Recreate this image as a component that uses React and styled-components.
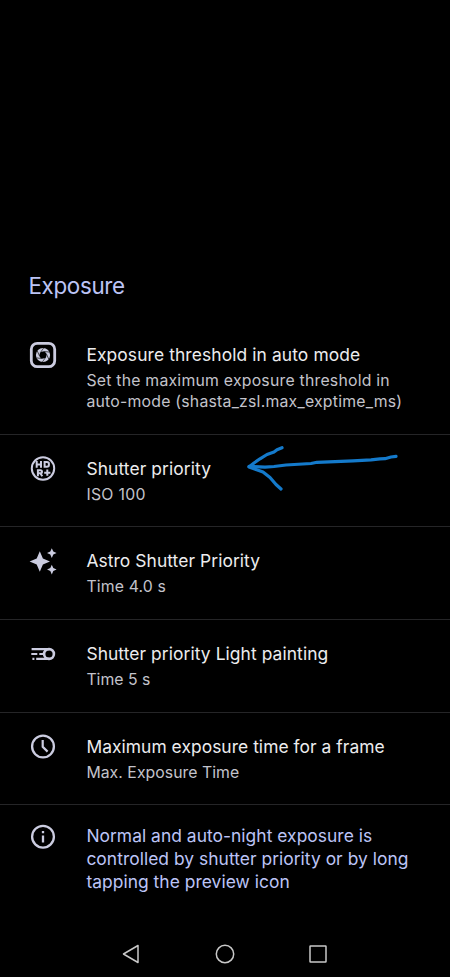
import styled, { createGlobalStyle } from "styled-components";

const GlobalStyle = createGlobalStyle`
  * {
    box-sizing: border-box;
  }

  body {
    margin: 0;
    background-color: #000;
    font-family: Inter, Roboto, sans-serif;
  }
`;

const Screen = styled.main`
  display: flex;
  flex-direction: column;
  height: 977px;
  padding-top: 270px;
  overflow: hidden;
  background-color: #000;
`;

const Heading = styled.h1`
  margin: 0 0 19px;
  padding-left: 28.5px;
  font-size: 22.4px;
  font-weight: 400;
  line-height: 32px;
  letter-spacing: -0.35px;
  color: #bcc4f6;
`;

const StyledRow = styled.section`
  position: relative;
  display: grid;
  grid-template-columns: 58.4px 1fr;
  height: ${(props) => props.$height}px;
  padding: 22px 0 0 28px;
  border-bottom: 1px solid #252527;
`;

const IconBox = styled.span`
  display: flex;
  width: 30px;
  height: 24px;
  align-items: center;
  justify-content: center;
  color: #cbcce0;

  svg {
    flex: none;
    overflow: visible;
  }
`;

const Title = styled.h2`
  margin: 0 0 3px;
  font-size: 17.4px;
  font-weight: 400;
  line-height: 24px;
  letter-spacing: ${(props) => props.$tracking}px;
  white-space: nowrap;
  color: #ececee;
`;

const Description = styled.p`
  margin: 0;
  font-size: 15.8px;
  line-height: 21px;
  letter-spacing: ${(props) => props.$tracking}px;
  white-space: nowrap;
  color: #c3c3cb;
`;

const Info = styled.section`
  display: grid;
  grid-template-columns: 58.4px 1fr;
  padding: 20px 0 0 28px;
`;

const InfoText = styled.p`
  margin: 0;
  font-size: 17.4px;
  line-height: 22.8px;
  letter-spacing: 0.04px;
  color: #bcc4f6;
`;

const InfoLine = styled.span`
  display: block;
  white-space: nowrap;
`;

const NavBar = styled.nav`
  display: flex;
  justify-content: space-between;
  height: 47px;
  margin-top: auto;
  padding: 0 122px 0 121px;
  align-items: center;
`;

const Arrow = styled.svg`
  position: absolute;
  top: 0;
  left: 235px;
  overflow: visible;
`;

function ApertureIcon() {
  return (
    <svg width="28" height="28" viewBox="0 0 28 28" fill="none">
      <rect x="2.3" y="2.3" width="23.4" height="23.4" rx="6" stroke="currentColor" strokeWidth="2.8" />
      <circle cx="14" cy="14" r="5.3" stroke="currentColor" strokeWidth="3.6" />
      {[0, 60, 120, 180, 240, 300].map((angle) => (
        <path
          key={angle}
          d="M11.2 11.8 14.8 6.8"
          stroke="#000"
          strokeWidth="0.6"
          transform={`rotate(${angle} 14 14)`}
        />
      ))}
    </svg>
  );
}

function HdrIcon() {
  return (
    <svg width="28" height="28" viewBox="0 0.5 28 28" fill="none" stroke="currentColor" strokeWidth="2">
      <circle cx="14" cy="14" r="11.2" />
      <path d="M7.700 6.500v6.800M12 6.500v6.800M7.700 9.900H12M15.600 7.500h2.300q2 0 2 1.800v1.200q0 1.800-2 1.800h-2.300z" />
      <path d="M8.900 21.800v-6h2.500q1.600 0 1.600 1.500t-1.600 1.500H8.900M11.300 18.800l2 3M15.200 18.200h6.200M18.300 15.100v6.200" />
    </svg>
  );
}

function SparklesIcon() {
  return (
    <svg width="28" height="28" viewBox="0 0 28 28" fill="currentColor">
      <path d="M10.800 4.300l3.100 7.100 7.100 3.100-7.100 3.100-3.100 7.100-3.100-7.100-7.100-3.100 7.100-3.100z" />
      <path d="M22.800 1.300l1.500 3.300 3.300 1.500-3.300 1.500-1.500 3.300-1.500-3.300L18 6.100l3.300-1.500z" />
      <path d="M22.800 17.800l1.500 3.300 3.300 1.500-3.300 1.500-1.500 3.300-1.500-3.300-3.300-1.500 3.300-1.500z" />
    </svg>
  );
}

function CometIcon() {
  return (
    <svg width="28" height="28" viewBox="0 0 28 28" fill="none" stroke="currentColor" strokeWidth="2.200">
      <circle cx="20" cy="14" r="4.900" strokeWidth="2.600" />
      <path d="M2.600 9.100H20M7.200 18.900H20M2.300 14h6M10.300 14h4.500M3.400 18.900h2" />
    </svg>
  );
}

function ClockIcon() {
  return (
    <svg width="28" height="28" viewBox="0 0.5 28 28" fill="none" stroke="currentColor">
      <circle cx="14" cy="14" r="10.900" strokeWidth="2.300" />
      <path d="M13.700 7.400v6.900l4.900 4.800" strokeWidth="2.200" />
    </svg>
  );
}

function InfoIcon() {
  return (
    <svg width="28" height="28" viewBox="0 0.300 28 28" fill="none" stroke="currentColor" strokeWidth="2.300">
      <circle cx="14" cy="14" r="10.900" />
      <path d="M14 12.700v7M14 8.200v2.300" />
    </svg>
  );
}

const settings = [
  {
    icon: <ApertureIcon />,
    title: "Exposure threshold in auto mode",
    lines: ["Set the maximum exposure threshold in", "auto-mode (shasta_zsl.max_exptime_ms)"],
    height: 114,
    tracking: 0.11,
    lineTracking: 0.23,
  },
  {
    icon: <HdrIcon />,
    title: "Shutter priority",
    lines: ["ISO 100"],
    height: 92,
    tracking: 0.1,
    lineTracking: 0.3,
    marked: true,
  },
  {
    icon: <SparklesIcon />,
    title: "Astro Shutter Priority",
    lines: ["Time 4.0 s"],
    height: 93,
    tracking: 0.08,
    lineTracking: 0.15,
  },
  {
    icon: <CometIcon />,
    title: "Shutter priority Light painting",
    lines: ["Time 5 s"],
    height: 93,
    tracking: 0.08,
    lineTracking: 0,
  },
  {
    icon: <ClockIcon />,
    title: "Maximum exposure time for a frame",
    lines: ["Max. Exposure Time"],
    height: 92,
    tracking: 0.05,
    lineTracking: 0.04,
  },
];

function DrawnArrow() {
  return (
    <Arrow
      width="175"
      height="65"
      viewBox="0 0 175 65"
      fill="none"
      stroke="#147acb"
      strokeWidth="3.200"
      strokeLinecap="round"
      strokeLinejoin="round"
    >
      <path d="M161 21.300l-5 .7-6 1.700-5 .2-9 .9-18 1-36 1.500-6 1.200-25 1.500-12 1.500-9 .700-16-.900" />
      <path d="M47 12.700l-5 2-3 2.300-7 2.500-7 4.300-6 4.200-5 4 7 2.500 7 2.500 7 5.500 6 7 5 4.500" />
    </Arrow>
  );
}

function SettingRow({ item }) {
  return (
    <StyledRow $height={item.height}>
      <IconBox>{item.icon}</IconBox>
      <div>
        <Title $tracking={item.tracking}>{item.title}</Title>
        {item.lines.map((line) => (
          <Description key={line} $tracking={item.lineTracking}>
            {line}
          </Description>
        ))}
      </div>
      {item.marked && <DrawnArrow />}
    </StyledRow>
  );
}

function App() {
  return (
    <>
      <GlobalStyle />
      <Screen>
        <Heading>Exposure</Heading>
        {settings.map((item) => (
          <SettingRow key={item.title} item={item} />
        ))}
        <Info>
          <IconBox>
            <InfoIcon />
          </IconBox>
          <InfoText>
            <InfoLine>Normal and auto-night exposure is</InfoLine>
            <InfoLine>controlled by shutter priority or by long</InfoLine>
            <InfoLine>tapping the preview icon</InfoLine>
          </InfoText>
        </Info>
        <NavBar>
          <svg width="20" height="20" viewBox="0 0 20 20" fill="none" stroke="#c8c8c8" strokeWidth="1.500" strokeLinejoin="round">
            <path d="M17 1.500v17L2.500 10z" />
          </svg>
          <svg width="20" height="20" viewBox="0 0 20 20" fill="none" stroke="#c8c8c8" strokeWidth="1.500">
            <circle cx="10" cy="10" r="8.700" />
          </svg>
          <svg width="20" height="20" viewBox="0 0 20 20" fill="none" stroke="#c8c8c8" strokeWidth="1.500">
            <rect x="2" y="2" width="16" height="16" rx="0.500" />
          </svg>
        </NavBar>
      </Screen>
    </>
  );
}

export default App;
